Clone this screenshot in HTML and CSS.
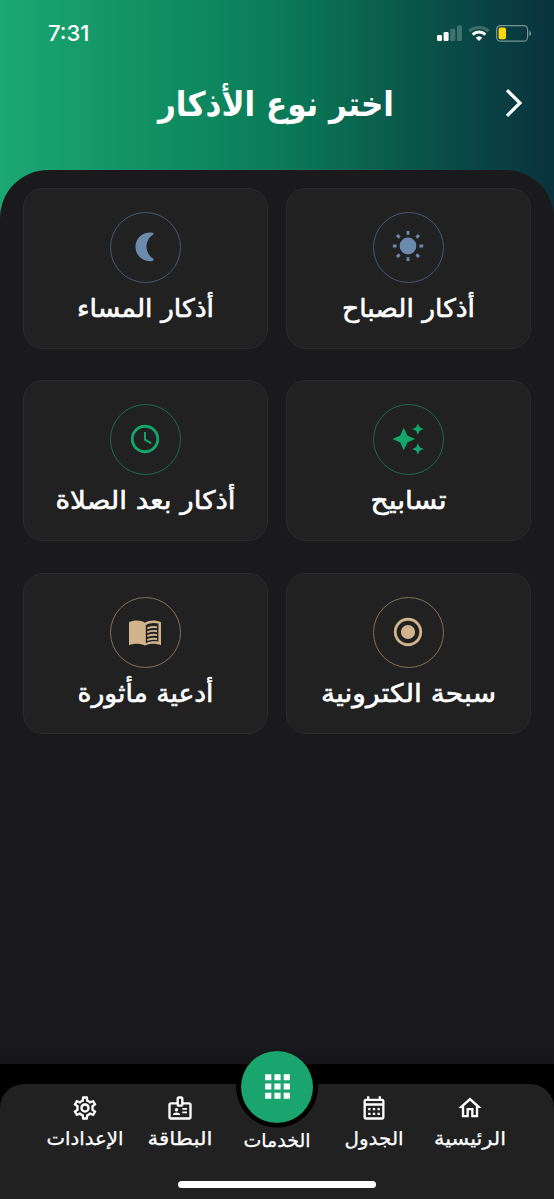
FILE: index.html
```html
<!DOCTYPE html>
<html lang="ar" dir="rtl">
<head>
<meta charset="utf-8">
<meta name="viewport" content="width=device-width, initial-scale=1">
<title>اختر نوع الأذكار</title>
<link rel="stylesheet" href="styles.css">
</head>
<body>
<div class="screen">
  <header class="header">
    <div class="status" dir="ltr">
      <span class="time">7:31</span>
      <svg class="status-icons" width="96" height="20" viewBox="0 0 96 20">
        <g fill="#fff">
          <rect x="1" y="11" width="5" height="6" rx="1.3"/>
          <rect x="7.6" y="8" width="5" height="9" rx="1.3"/>
          <rect x="14.3" y="4.7" width="5" height="12.3" rx="1.3" opacity=".22"/>
          <rect x="21" y="1.5" width="5" height="15.5" rx="1.3" opacity=".22"/>
        </g>
        <g fill="none" stroke="#fff" stroke-width="3">
          <path d="M33.4 7.2a14 14 0 0 1 19.2 0" opacity=".22"/>
          <path d="M36.7 10.6a9 9 0 0 1 12.6 0"/>
        </g>
        <path d="M43 17l-3.3-3.3a4.9 4.9 0 0 1 6.6 0z" fill="#fff"/>
        <rect x="60.6" y="1.6" width="31" height="15.6" rx="4" fill="none" stroke="#fff" stroke-opacity=".45" stroke-width="1.2"/>
        <rect x="62.6" y="3.6" width="7.4" height="11.6" rx="1.8" fill="#ffd60a"/>
        <path d="M93.4 6.6q3.2 2.8 0 5.6z" fill="#fff" opacity=".5"/>
      </svg>
    </div>
    <div class="titlebar">
      <svg class="back" width="20" height="30" viewBox="0 0 20 30"><path d="M3 2.2L16 15 3 27.8" fill="none" stroke="#fff" stroke-width="3.2"/></svg>
      <svg class="title" role="heading" width="260" height="64"><text x="129" y="45" textLength="236" lengthAdjust="spacingAndGlyphs">اختر نوع الأذكار</text></svg>
    </div>
  </header>

  <main class="sheet">
    <div class="grid">
      <section class="card blue">
        <div class="ring"><svg viewBox="0 0 34 34"><circle cx="17" cy="16" r="8.4"/><g class="line"><path d="M17 .9v3.800M17 27.3v3.800M1.800 16h3.800M28.400 16h3.800M6 5l2.600 2.600M28 5l-2.600 2.600M6 27l2.600-2.600M28 27l-2.600-2.600"/></g></svg></div>
        <svg class="label" height="40"><text x="50%" y="29" textLength="133" lengthAdjust="spacingAndGlyphs">أذكار الصباح</text></svg>
      </section>
      <section class="card blue">
        <div class="ring"><svg viewBox="0 0 34 34"><path d="M24.4 2.8Q26.300 3.200 25.2 4.600A14 14 0 0 0 25.2 28.600Q26.300 30.300 24.4 30.900A14.300 14.300 0 1 1 24.4 2.8Z"/></svg></div>
        <svg class="label" height="40"><text x="50%" y="29" textLength="137" lengthAdjust="spacingAndGlyphs">أذكار المساء</text></svg>
      </section>
      <section class="card green">
        <div class="ring"><svg viewBox="0 0 24 24"><path d="M19 9l1.25-2.75L23 5l-2.75-1.25L19 1l-1.25 2.75L15 5l2.75 1.25L19 9zm-7.5.5L9 4 6.5 9.5 1 12l5.5 2.5L9 20l2.5-5.5L17 12l-5.5-2.5zM19 15l-1.25 2.75L15 19l2.75 1.25L19 23l1.25-2.75L23 19l-2.75-1.25L19 15z"/></svg></div>
        <svg class="label" height="40"><text x="50%" y="29" textLength="76" lengthAdjust="spacingAndGlyphs">تسابيح</text></svg>
      </section>
      <section class="card green">
        <div class="ring"><svg viewBox="0 0 24 24"><g class="clock"><circle cx="12" cy="12" r="9"/><path d="M12 7v5.5l4.4 2.6"/></g></svg></div>
        <svg class="label" height="40"><text x="50%" y="29" textLength="180" lengthAdjust="spacingAndGlyphs">أذكار بعد الصلاة</text></svg>
      </section>
      <section class="card sand">
        <div class="ring"><svg viewBox="0 0 24 24"><path fill-rule="evenodd" d="M12 2a10 10 0 1 0 0 20 10 10 0 0 0 0-20zm0 18a8 8 0 1 1 0-16 8 8 0 0 1 0 16z"/><circle cx="12" cy="12" r="5"/></svg></div>
        <svg class="label" height="40"><text x="50%" y="29" textLength="175" lengthAdjust="spacingAndGlyphs">سبحة الكترونية</text></svg>
      </section>
      <section class="card sand">
        <div class="ring"><svg viewBox="0 0 34 34"><path fill-rule="evenodd" d="M17 7.8C12.600 4.800 5.500 5 1 7.300V30.200C6 28 12.500 28.200 17 30.600 21.500 28.200 28 28 33 30.200V7.300C28.500 5 21.400 4.800 17 7.800ZM17.800 10C21.500 7.700 26.500 7.400 30.400 8.600V26.600C26.200 25.900 21.500 26.200 17.800 28.200Z"/><path class="lines" d="M19.300 13.400Q24 11.400 29 12.300M19.300 17.300Q24 15.300 29 16.200M19.300 21.200Q24 19.200 29 20.100M19.300 25.100Q24 23.100 29 24"/></svg></div>
        <svg class="label" height="40"><text x="50%" y="29" textLength="136" lengthAdjust="spacingAndGlyphs">أدعية مأثورة</text></svg>
      </section>
    </div>
  </main>

  <footer class="dock">
    <nav class="nav">
      <a class="tab">
        <svg class="icon" viewBox="0 0 24 24"><path d="M12 5.690l5 4.500V18h-2v-6H9v6H7v-7.810l5-4.500M12 3L2 12h3v8h6v-6h2v6h6v-8h3L12 3z"/></svg>
        <svg class="caption"><text x="50%" y="22" textLength="72" lengthAdjust="spacingAndGlyphs">الرئيسية</text></svg>
      </a>
      <a class="tab">
        <svg class="icon" viewBox="0 0 24 24"><path d="M19 4h-1V2h-2v2H8V2H6v2H5c-1.110 0-1.990.9-1.990 2L3 20c0 1.100.890 2 2 2h14c1.100 0 2-.9 2-2V6c0-1.100-.9-2-2-2zm0 16H5V10h14v10zm0-12H5V6h14v2zM9 14H7v-2h2v2zm4 0h-2v-2h2v2zm4 0h-2v-2h2v2zm-8 4H7v-2h2v2zm4 0h-2v-2h2v2zm4 0h-2v-2h2v2z"/></svg>
        <svg class="caption"><text x="50%" y="22" textLength="59" lengthAdjust="spacingAndGlyphs">الجدول</text></svg>
      </a>
      <a class="tab active">
        <span class="fab"><svg viewBox="0 0 24 24"><path d="M4 4h4v4H4zM10 4h4v4h-4zM16 4h4v4h-4zM4 10h4v4H4zM10 10h4v4h-4zM16 10h4v4h-4zM4 16h4v4H4zM10 16h4v4h-4zM16 16h4v4h-4z"/></svg></span>
        <svg class="caption"><text x="50%" y="22" textLength="67" lengthAdjust="spacingAndGlyphs">الخدمات</text></svg>
      </a>
      <a class="tab">
        <svg class="icon" viewBox="0 0 24 24"><path d="M20 7h-5V4c0-1.100-.9-2-2-2h-2c-1.100 0-2 .9-2 2v3H4c-1.100 0-2 .9-2 2v11c0 1.100.9 2 2 2h16c1.100 0 2-.9 2-2V9c0-1.100-.9-2-2-2zM11 4h2v5h-2V4zm9 16H4V9h5c0 1.100.9 2 2 2h2c1.100 0 2-.9 2-2h5v11z"/><circle cx="9" cy="13.500" r="1.500"/><path d="M11.080 16.180C10.440 15.900 9.740 15.750 9 15.750s-1.440.150-2.080.430c-.560.240-.920.780-.920 1.390V18h6v-.430c0-.610-.360-1.150-.920-1.390zM14 12h4v1.500h-4zM14 15h4v1.500h-4z"/></svg>
        <svg class="caption"><text x="50%" y="22" textLength="65" lengthAdjust="spacingAndGlyphs">البطاقة</text></svg>
      </a>
      <a class="tab">
        <svg class="icon" viewBox="0 0 24 24"><path d="M19.430 12.980c.04-.32.07-.64.07-.98 0-.34-.03-.66-.07-.98l2.110-1.650c.190-.150.240-.420.120-.640l-2-3.460c-.090-.160-.260-.250-.440-.250-.060 0-.120.010-.170.030l-2.490 1c-.520-.4-1.080-.730-1.690-.980l-.380-2.650C14.460 2.180 14.250 2 14 2h-4c-.250 0-.460.180-.490.420l-.380 2.650c-.610.250-1.170.590-1.690.980l-2.490-1c-.060-.020-.120-.030-.180-.030-.170 0-.340.090-.430.250l-2 3.460c-.130.220-.070.490.120.640l2.110 1.650c-.040.320-.070.650-.070.980 0 .330.030.660.070.980l-2.110 1.650c-.190.150-.240.420-.120.640l2 3.460c.090.160.260.250.440.250.060 0 .120-.010.170-.030l2.490-1c.520.4 1.080.730 1.690.980l.380 2.650c.030.240.240.420.490.420h4c.250 0 .460-.180.490-.420l.380-2.650c.610-.250 1.170-.590 1.690-.980l2.490 1c.060.020.120.030.180.030.170 0 .340-.090.430-.250l2-3.460c.120-.220.070-.490-.120-.640l-2.110-1.650zm-1.980-1.710c.04.310.05.520.05.730 0 .210-.020.430-.050.730l-.140 1.130.890.7 1.080.840-.7 1.210-1.270-.510-1.040-.420-.9.680c-.430.320-.840.560-1.250.730l-1.060.430-.160 1.130-.2 1.350h-1.400l-.190-1.350-.160-1.130-1.060-.430c-.430-.180-.830-.410-1.230-.710l-.910-.7-1.060.430-1.270.510-.7-1.210 1.080-.840.890-.7-.140-1.130c-.030-.310-.050-.540-.050-.740s.020-.430.050-.730l.140-1.130-.890-.7-1.080-.840.7-1.210 1.270.510 1.040.420.9-.680c.430-.320.840-.560 1.250-.730l1.060-.430.160-1.130.2-1.350h1.390l.190 1.350.160 1.130 1.060.430c.430.180.830.410 1.230.710l.910.7 1.060-.430 1.270-.510.7 1.210-1.070.850-.890.7.140 1.130zM12 8c-2.210 0-4 1.790-4 4s1.790 4 4 4 4-1.790 4-4-1.790-4-4-4zm0 6c-1.100 0-2-.9-2-2s.9-2 2-2 2 .9 2 2-.9 2-2 2z"/></svg>
        <svg class="caption"><text x="50%" y="22" textLength="77" lengthAdjust="spacingAndGlyphs">الإعدادات</text></svg>
      </a>
    </nav>
    <div class="home-bar"></div>
  </footer>
</div>
</body>
</html>
```

FILE: styles.css
```css
* { box-sizing: border-box; }
body { margin: 0; background: #000; color: #fff; font-family: "DejaVu Sans", sans-serif; }
svg { display: block; }
text { fill: #fff; text-anchor: middle; direction: rtl; font-family: "DejaVu Sans", sans-serif; }

.screen {
  width: 554px;
  height: 1199px;
  display: flex;
  flex-direction: column;
  overflow: hidden;
  background: linear-gradient(90deg, #1ba873 0, #0a7c58 277px, #0a5148 430px, #09323e 554px) top / 100% 240px no-repeat #000;
}

.header { height: 170px; }
.status {
  display: flex;
  justify-content: space-between;
  align-items: center;
  height: 66px;
  padding: 0 22px 0 48px;
}
.time { font: 500 22px/26px Inter, sans-serif; }
.status-icons { margin-top: 2px; }
.titlebar {
  display: grid;
  grid-template-columns: 73px 1fr 73px;
  align-items: center;
  height: 73px;
}
.back { margin-right: 30px; }
.title { justify-self: center; }
.title text { font-size: 34px; font-weight: 700; }

.sheet {
  height: 894px;
  padding: 17.500px 23px 0;
  border-radius: 48px 48px 0 0;
  background: linear-gradient(#1a1a1c 0, #1a1a1c 860px, #171719 894px);
}
.grid {
  display: grid;
  grid-template-columns: 1fr 1fr;
  gap: 31.500px 18px;
}
.card {
  height: 161px;
  display: flex;
  flex-direction: column;
  align-items: center;
  padding-top: 23px;
  border: 1px solid #2b2b2c;
  border-radius: 20px;
  background: #212121;
}
.ring {
  width: 71px;
  height: 71px;
  display: grid;
  place-items: center;
  border: 1.500px solid;
  border-radius: 50%;
}
.ring svg { width: 34px; height: 34px; margin: 0 1px 1px 0; fill: var(--tint); }
.blue { --tint: #6b8bae; }
.blue .ring { border-color: #4a586a; }
.green { --tint: #12a56c; }
.green .ring { border-color: #1b6a4b; }
.sand { --tint: #d2b48c; }
.sand .ring { border-color: #807060; }
.line { stroke: var(--tint); stroke-width: 2.900; }
.clock { fill: none; stroke: var(--tint); stroke-width: 2; }
.clock path { stroke-width: 1.400; }
.lines { fill: none; stroke: var(--tint); stroke-width: 1.900; }
.label { width: 100%; margin-top: 5px; overflow: visible; }
.label text { font-size: 25.500px; stroke: #fff; stroke-width: .6px; }

.dock { height: 135px; padding-top: 20px; background: #000; }
.nav {
  display: grid;
  grid-template-columns: 95px 96px 98px 96px 95px;
  height: 115px;
  padding: 9.500px 37px 0;
  border-radius: 24px 24px 0 0;
  background: radial-gradient(circle at 50% 2.500px, #000 40.500px, #212121 41.500px);
}
.tab { display: flex; flex-direction: column; align-items: center; }
.icon { width: 28px; height: 28px; fill: #fff; flex: none; }
.caption { width: 96px; height: 32px; margin-top: 1.500px; flex: none; }
.caption text { font-size: 19px; stroke: #fff; stroke-width: .25px; }
.fab {
  display: grid;
  place-items: center;
  flex: none;
  width: 72px;
  height: 72px;
  margin-top: -43px;
  border-radius: 50%;
  background: #1aa56f;
  box-shadow: 0 1px 3px rgba(0, 0, 0, .5);
}
.active .caption { margin-top: 2.500px; }
.fab svg { width: 37px; height: 37px; fill: #fff; }
.home-bar {
  width: 198px;
  height: 7px;
  margin: -18px auto 0;
  border-radius: 4px;
  background: #fff;
}
```
